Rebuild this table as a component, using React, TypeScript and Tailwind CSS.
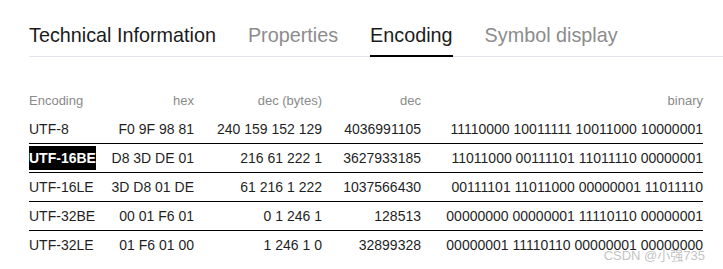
import React from 'react';

const tabs = [
    { label: 'Technical Information', active: false, strong: true },
    { label: 'Properties', active: false, strong: false },
    { label: 'Encoding', active: true, strong: true },
    { label: 'Symbol display', active: false, strong: false },
];

const rows = [
    { enc: 'UTF-8', hex: 'F0 9F 98 81', bytes: '240 159 152 129', dec: '4036991105', bin: '11110000 10011111 10011000 10000001' },
    { enc: 'UTF-16BE', hex: 'D8 3D DE 01', bytes: '216 61 222 1', dec: '3627933185', bin: '11011000 00111101 11011110 00000001', marked: true },
    { enc: 'UTF-16LE', hex: '3D D8 01 DE', bytes: '61 216 1 222', dec: '1037566430', bin: '00111101 11011000 00000001 11011110' },
    { enc: 'UTF-32BE', hex: '00 01 F6 01', bytes: '0 1 246 1', dec: '128513', bin: '00000000 00000001 11110110 00000001' },
    { enc: 'UTF-32LE', hex: '01 F6 01 00', bytes: '1 246 1 0', dec: '32899328', bin: '00000001 11110110 00000001 00000000' },
];

const COLS = 'grid grid-cols-[80px_85px_128px_99px_1fr] items-center';

export default function App() {
    return (
        <div
            className="relative w-[723px] h-[269px] overflow-hidden bg-white pl-[29px]"
            style={{ fontFamily: "'Liberation Sans', Arial, 'Noto Sans CJK SC', sans-serif" }}
        >
            {/* tab strip */}
            <div className="flex items-end gap-8 pt-[23px] border-b border-[#e1e4ea]">
                {tabs.map((t) => (
                    <div
                        key={t.label}
                        className={
                            t.active
                                ? 'text-[19.8px] leading-6 pb-[8px] -mb-px border-b-2 border-black text-[#1b1b1b]'
                                : t.strong
                                ? 'text-[19.8px] leading-6 pb-[9px] text-[#1b1b1b]'
                                : 'text-[19.8px] leading-6 pb-[9px] text-[#8c8c8c]'
                        }
                    >
                        {t.label}
                    </div>
                ))}
            </div>

            {/* encoding table */}
            <div className="w-[674px] mt-[30px] text-[14px] text-[#1f1f1f]">
                <div className={`${COLS} h-[28px] text-[13px] text-[#8a8a8a]`}>
                    <span>Encoding</span>
                    <span className="text-right">hex</span>
                    <span className="text-right">dec (bytes)</span>
                    <span className="text-right">dec</span>
                    <span className="text-right">binary</span>
                </div>
                {rows.map((r, i) => (
                    <div
                        key={r.enc}
                        className={`${COLS} h-[29px] ${i < rows.length - 1 ? 'border-b border-black' : ''}`}
                    >
                        <span>
                            {r.marked ? (
                                <span className="bg-black text-white font-bold py-[4px]">{r.enc}</span>
                            ) : (
                                r.enc
                            )}
                        </span>
                        <span className="text-right">{r.hex}</span>
                        <span className="text-right">{r.bytes}</span>
                        <span className="text-right">{r.dec}</span>
                        <span className="text-right">{r.bin}</span>
                    </div>
                ))}
            </div>

            <span className="absolute right-[18px] bottom-[5px] text-[13px] leading-4 text-[#c4c4c4]">CSDN @小强735</span>
        </div>
    );
}
